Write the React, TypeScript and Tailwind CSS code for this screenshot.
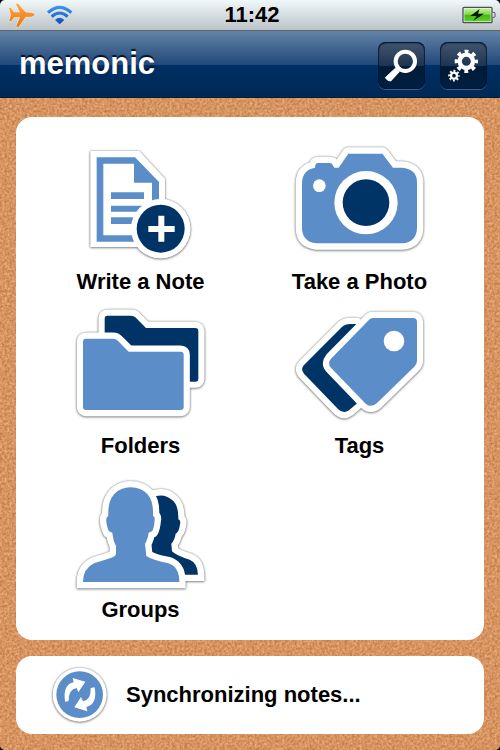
import type { ReactNode } from "react";

const LIGHT = "#5b8dc8";
const NAVY = "#003366";

function PlaneIcon() {
  return (
    <svg viewBox="24 6 84 78" className="w-[28px] h-[26px]" aria-hidden="true">
      <defs>
        <linearGradient id="plane" x1="0" y1="0" x2="0" y2="1">
          <stop offset="0" stopColor="#ffa94a" />
          <stop offset="1" stopColor="#ee7408" />
        </linearGradient>
      </defs>
      <path
        d="M27 23 L32 23 L42 37 L60 37 L47 11 L54 11 L77 37 L94 38 Q103 40 104 44 Q103 48 94 50 L77 51 L56 80 L48 80 L60 52 L43 52 L33 64 L27 64 L33 44 Z"
        fill="url(#plane)"
        stroke="#fff"
        strokeWidth="2"
        paintOrder="stroke"
      />
    </svg>
  );
}

function WifiIcon() {
  return (
    <svg viewBox="138 15 81 63" className="w-[27px] h-[21px]" aria-hidden="true">
      <defs>
        <linearGradient id="wifi" gradientUnits="userSpaceOnUse" x1="0" y1="18" x2="0" y2="74">
          <stop offset="0" stopColor="#3f97ee" />
          <stop offset="1" stopColor="#0b49c0" />
        </linearGradient>
      </defs>
      <g fill="none" stroke="url(#wifi)" strokeWidth="9">
        <path d="M144 38 Q179 6 214 38" />
        <path d="M155 50 Q179 28 203 50" />
      </g>
      <path d="M179 73 L165 60 Q179 47 193 60 Z" fill="url(#wifi)" />
    </svg>
  );
}

function BatteryIcon() {
  return (
    <svg viewBox="636 18 102 54" className="w-[34px] h-[18px]" aria-hidden="true">
      <defs>
        <linearGradient id="battery" x1="0" y1="0" x2="0" y2="1">
          <stop offset="0" stopColor="#c4f09c" />
          <stop offset="0.45" stopColor="#7ddb44" />
          <stop offset="0.5" stopColor="#46b516" />
          <stop offset="1" stopColor="#5bd324" />
        </linearGradient>
      </defs>
      <rect x="639" y="22" width="87" height="46" rx="3" fill="#e9f5e2" stroke="#4d5258" strokeWidth="4" />
      <rect x="643" y="26" width="79" height="38" fill="url(#battery)" />
      <path d="M728 37 h4 q3 0 3 3 v9 q0 3 -3 3 h-4" fill="#dfe4e6" stroke="#4d5258" strokeWidth="3" />
      <path d="M689 27 L661 48 L680 48 L669 63 L702 41 L684 41 Z" fill="#0a1a05" />
    </svg>
  );
}

function SearchIcon() {
  return (
    <svg viewBox="24 36 141 141" className="size-full" aria-hidden="true">
      <circle cx="106" cy="94" r="29" fill="none" stroke="#fff" strokeWidth="12" />
      <path d="M77 114 L88 125 L62 153 Q53 154 46 143 Z" fill="#fff" stroke="#fff" strokeWidth="3" />
    </svg>
  );
}

function SettingsIcon() {
  return (
    <svg viewBox="210 36 141 141" className="size-full" aria-hidden="true">
      <g fill="none" stroke="#fff">
        <circle cx="289" cy="94" r="20" strokeWidth="13" />
        <circle cx="289" cy="94" r="29" strokeWidth="12" pathLength="16" strokeDasharray="1 1" strokeDashoffset="0.5" />
        <circle cx="252" cy="137" r="9" strokeWidth="7" />
        <circle cx="252" cy="137" r="14" strokeWidth="7" pathLength="16" strokeDasharray="1 1" strokeDashoffset="0.5" />
      </g>
    </svg>
  );
}

function Sticker({ viewBox, children }: { viewBox: string; children: ReactNode }) {
  return (
    <svg
      viewBox={viewBox}
      className="w-[141px] h-[125px] overflow-visible [filter:drop-shadow(0_0_1px_rgba(0,0,0,0.4))_drop-shadow(0_1px_1px_rgba(0,0,0,0.35))]"
      strokeLinejoin="round"
      aria-hidden="true"
    >
      {children}
    </svg>
  );
}

function NoteIcon() {
  return (
    <Sticker viewBox="30 36 423 375">
      <path d="M91 63 L238 63 L315 146 L315 351 L91 351 Z" fill="#fff" />
      <circle cx="302" cy="296" r="89" fill="#fff" />
      <path d="M110 82 H225 L297 156 V335 H110 Z M130 101 V316 H276 V158 H222 V101 Z" fill={LIGHT} fillRule="evenodd" />
      <path d="M153 187 h99 v20 h-99 Z M153 227 h99 v18 h-99 Z M153 262 h80 v20 h-80 Z" fill={LIGHT} />
      <circle cx="302" cy="296" r="89" fill="#fff" />
      <circle cx="302" cy="296" r="72" fill={NAVY} />
      <path d="M295 257 h18 v31 h31 v18 h-31 v29 h-18 v-29 h-30 v-18 h30 Z" fill="#fff" />
    </Sticker>
  );
}

function CameraIcon() {
  return (
    <Sticker viewBox="27 36 423 375">
      <path
        d="M113 99 H150 Q157 99 159 107 L163 113 H176 L205 71 H307 L339 113 H366 Q411 117 411 157 V296 Q408 336 368 340 H109 Q69 336 66 298 V157 Q68 119 105 113 Q106 99 113 99 Z"
        fill={LIGHT}
        stroke="#fff"
        strokeWidth="38"
        paintOrder="stroke"
      />
      <circle cx="118" cy="167" r="19" fill="#fff" />
      <circle cx="258" cy="218" r="95" fill="#fff" />
      <circle cx="258" cy="218" r="70" fill={NAVY} />
    </Sticker>
  );
}

function FoldersIcon() {
  return (
    <Sticker viewBox="30 24 423 375">
      <g stroke="#fff" strokeWidth="37" paintOrder="stroke">
        <path
          d="M142 53 H213 Q221 53 226 58 L258 90 H406 Q415 90 415 99 V242 Q415 251 406 251 H142 Q134 251 134 242 V62 Q134 53 142 53 Z"
          fill={NAVY}
        />
        <path
          d="M78 122 H159 Q167 122 172 127 L206 161 H362 Q371 161 371 170 V327 Q371 336 362 336 H78 Q69 336 69 327 V131 Q69 122 78 122 Z"
          fill={LIGHT}
        />
      </g>
    </Sticker>
  );
}

function TagsIcon() {
  return (
    <Sticker viewBox="27 24 423 375">
      <g stroke="#fff" strokeWidth="37" paintOrder="stroke">
        <path d="M230 78 H210 Q196 78 185 88 L72 201 Q60 214 72 227 L174 333 Q190 349 207 337 L230 317 Z" fill={NAVY} />
        <path
          d="M279 60 H399 Q411 60 411 72 V188 Q411 197 403 206 L291 315 Q274 331 257 317 L153 209 Q141 196 153 182 L263 70 Q270 60 279 60 Z"
          fill={LIGHT}
        />
      </g>
      <circle cx="342" cy="129" r="31" fill="#fff" />
    </Sticker>
  );
}

function GroupsIcon() {
  return (
    <Sticker viewBox="30 15 423 375">
      <g stroke="#fff" strokeWidth="38" paintOrder="stroke" strokeLinejoin="miter">
        <path
          d="M288 93 Q318 86 340 108 Q356 124 355 163 Q363 166 360 178 Q357 202 347 206 Q344 225 334 236 L336 259 Q348 272 389 284 Q413 294 414 329 H240 V225 Z"
          fill={NAVY}
        />
        <path
          d="M212 67 Q243 67 262 87 Q281 108 279 152 Q286 156 284 165 Q282 191 276 199 L266 203 Q263 224 255 236 L259 273 Q277 285 322 294 Q358 303 358 351 H69 Q69 311 102 295 L150 280 Q167 274 168 268 V242 Q160 230 157 203 L147 199 Q142 191 139 171 Q137 156 145 152 Q143 108 163 87 Q182 67 212 67 Z"
          fill={LIGHT}
        />
      </g>
    </Sticker>
  );
}

function SyncIcon() {
  return (
    <svg
      viewBox="156 78 168 168"
      className="size-[56px] shrink-0 overflow-visible [filter:drop-shadow(0_0_1px_rgba(0,0,0,0.4))_drop-shadow(0_1px_1px_rgba(0,0,0,0.35))]"
      aria-hidden="true"
    >
      <circle cx="239" cy="161" r="81" fill="#fff" />
      <circle cx="239" cy="161" r="70" fill={LIGHT} />
      <g fill="#fff">
        <path d="M195 182 Q188 130 221 124 L218 111 L256 122 L235 154 L230 141 Q205 145 206 180 Z" />
        <path d="M284 139 Q293 190 259 198 L262 211 L223 199 L243 168 L249 181 Q274 177 272 141 Z" />
      </g>
    </svg>
  );
}

function CorkTexture() {
  return (
    <svg className="absolute inset-0 w-full h-full" aria-hidden="true">
      <filter id="cork" x="0" y="0" width="100%" height="100%" colorInterpolationFilters="sRGB">
        <feTurbulence type="fractalNoise" baseFrequency="0.4" numOctaves="3" seed="4" />
        <feColorMatrix values="0.24 0 0 0 0.72  0.34 0 0 0 0.41  0.36 0 0 0 0.2  0 0 0 0 1" />
      </filter>
      <rect width="100%" height="100%" filter="url(#cork)" />
    </svg>
  );
}

const actions = [
  { label: "Write a Note", icon: <NoteIcon /> },
  { label: "Take a Photo", icon: <CameraIcon /> },
  { label: "Folders", icon: <FoldersIcon /> },
  { label: "Tags", icon: <TagsIcon /> },
  { label: "Groups", icon: <GroupsIcon /> },
];

const toolButton =
  "size-[47px] rounded-lg bg-[linear-gradient(#43566f_0%,#1d3452_50%,#001a38_50%,#00203f_100%)] shadow-[inset_0_1px_2px_#00142e,inset_0_0_0_1px_rgba(0,20,46,0.6),0_1px_0_rgba(120,150,190,0.5)]";

export default function App() {
  return (
    <div className="min-h-screen bg-black flex flex-col font-['Liberation_Sans',Arial,sans-serif] font-bold text-black">
      <div className="flex-1 flex flex-col rounded-[5px] overflow-hidden">
        <div className="grid grid-cols-3 items-center h-[31px] pl-2 pr-1 border-b border-[#5f666d] bg-[linear-gradient(#f1f8fa,#bcc3c6)]">
          <div className="flex items-center gap-[10px]">
            <PlaneIcon />
            <WifiIcon />
          </div>
          <time className="text-center text-[22px] leading-[30px]">11:42</time>
          <div className="flex justify-end">
            <BatteryIcon />
          </div>
        </div>

        <header className="flex justify-between pl-[19px] pr-[13px] pt-[11px] pb-[9px] bg-[linear-gradient(#6483a7_0%,#22497a_50%,#003066_51%,#002854_100%)] shadow-[inset_0_-1px_0_#001c40]">
          <h1 className="text-[31px] leading-[44px] text-white [text-shadow:0_-2px_1px_#001226]">memonic</h1>
          <div className="flex gap-[15px]">
            <button type="button" aria-label="Search" className={toolButton}>
              <SearchIcon />
            </button>
            <button type="button" aria-label="Settings" className={toolButton}>
              <SettingsIcon />
            </button>
          </div>
        </header>

        <main className="relative flex-1 bg-[#d69560]">
          <CorkTexture />
          <div className="relative flex flex-col gap-4 px-4 pt-[19px] pb-4">
            <section className="grid grid-cols-2 gap-y-[9px] px-[15px] pt-[25px] pb-[15px] bg-white rounded-2xl">
              {actions.map((action) => (
                <button key={action.label} type="button" className="flex flex-col items-center">
                  {action.icon}
                  <span className="text-[22px] leading-[30px]">{action.label}</span>
                </button>
              ))}
            </section>

            <section className="flex items-center gap-[18px] h-[78px] pl-9 bg-white rounded-2xl">
              <SyncIcon />
              <p className="text-[22px] leading-[30px]">Synchronizing notes...</p>
            </section>
          </div>
        </main>
      </div>
    </div>
  );
}
